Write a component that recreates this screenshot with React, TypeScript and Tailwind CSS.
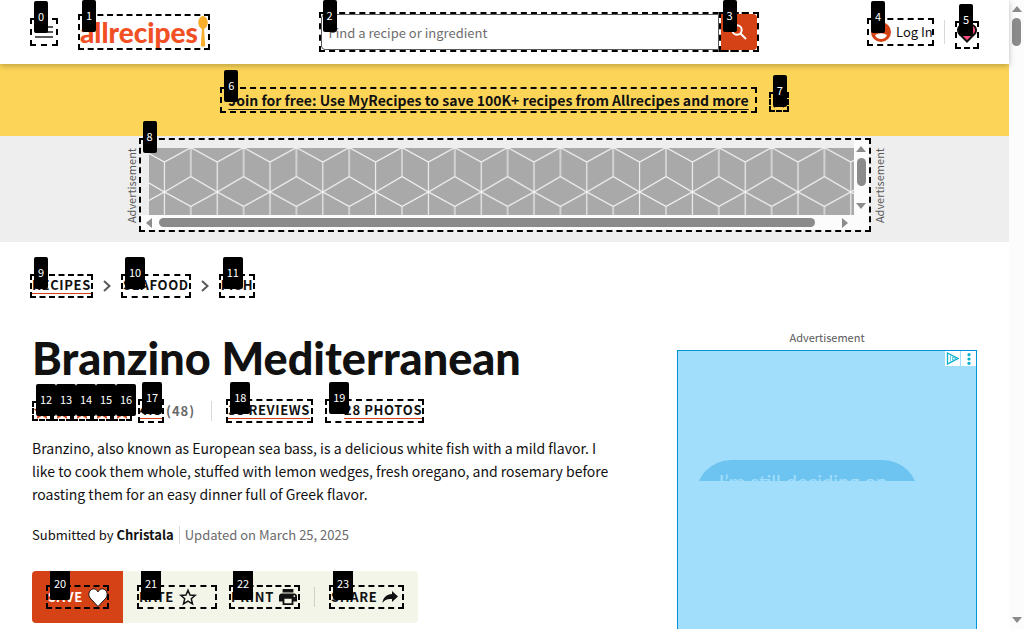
import type { ReactNode } from "react";

const stars = [12, 13, 14, 15, 16];

function Mark({ n, top = "-top-[19px]" }: { n: number; top?: string }) {
  return (
    <span aria-hidden="true" className="pointer-events-none absolute inset-0 border-2 border-dashed border-black">
      <span
        className={`absolute left-[2px] ${top} z-10 flex h-8 items-center rounded-xs bg-black px-1 pb-[2px] text-[11px] leading-4 font-normal tracking-normal text-white`}
      >
        {n}
      </span>
    </span>
  );
}

function Crumb({ n, children, underline = false }: { n: number; children: ReactNode; underline?: boolean }) {
  return (
    <a href="#" className="relative flex h-6 items-start px-[2px] pt-[2px] text-[13px] leading-[18px] font-bold tracking-wider">
      <span className={underline ? "h-[18px] border-b border-[#d54215]" : ""}>{children}</span>
      <Mark n={n} />
    </a>
  );
}

function Chevron() {
  return (
    <svg className="mx-[10px] h-3 w-2" viewBox="0 0 8 12" fill="none" stroke="#595959" strokeWidth="2">
      <path d="M1 1l5.500 5L1 11" />
    </svg>
  );
}

function Triangle({ className }: { className: string }) {
  return (
    <svg className={`h-[6px] w-[10px] shrink-0 ${className}`} viewBox="0 0 10 6" fill="#8b8b8b">
      <path d="M5 0l5 6H0z" />
    </svg>
  );
}

function CubePattern() {
  return (
    <svg className="block h-[67px] w-full bg-[#a9a9a9]" aria-hidden="true">
      <defs>
        <pattern id="cubes" x="-11" y="0" width="52.8" height="67" patternUnits="userSpaceOnUse">
          <path
            d="M0 -.5L26.4 14L52.8 -.5M0 28.5L26.4 44L52.8 28.5M0 58.5L26.4 44L52.8 58.5M26.4 14V67M0 0V28.5M0 58.5V67M52.8 0V28.5M52.8 58.5V67"
            fill="none"
            stroke="#f2f2f2"
            strokeWidth="1.1"
          />
        </pattern>
      </defs>
      <rect width="100%" height="100%" fill="url(#cubes)" />
    </svg>
  );
}

function Header() {
  return (
    <header className="relative z-10 flex h-16 shrink-0 items-center justify-between bg-white px-[30px] shadow-[0_2px_6px_rgba(0,0,0,0.25)]">
      <div className="flex items-center gap-5">
        <button aria-label="Menu" className="relative flex h-7 w-7 items-center justify-center">
          <svg className="h-4 w-[18px]" viewBox="0 0 18 16" stroke="#595959" strokeWidth="2">
            <path d="M0 3h18M0 8h18M0 13h18" />
          </svg>
          <Mark n={0} />
        </button>
        <a href="#" className="relative flex h-9 w-[132px] items-center pl-[2px]">
          <span className="font-[Lato,sans-serif] text-[28px] leading-8 font-black text-[#f15025]">allrecipes</span>
          <svg className="absolute top-[2px] right-[2px] h-8 w-[10px]" viewBox="0 0 10 32" fill="#f9ae2b">
            <ellipse cx="5" cy="6.5" rx="4.8" ry="6.5" />
            <path d="M4 12h2l1.200 18q-2.200 1.500-4.400 0z" />
          </svg>
          <Mark n={1} top="-top-[16px]" />
        </a>
      </div>
      <form className="relative flex h-10 w-[440px] p-[2px]">
        <input
          aria-label="Search"
          placeholder="Find a recipe or ingredient"
          className="min-w-0 flex-1 rounded-l border border-[#595959] px-[7px] pt-[2px] text-[13px] leading-5 placeholder:text-[#6e6e6e]"
        />
        <Mark n={2} top="-top-[14px]" />
        <button type="button" aria-label="Submit search" className="relative -my-[2px] -mr-[2px] flex w-10 p-[2px]">
          <span className="flex flex-1 items-center justify-center rounded-r bg-[#d54215]">
            <svg className="h-4 w-4" viewBox="0 0 16 16" fill="none" stroke="white" strokeWidth="2">
              <circle cx="6" cy="6" r="4.700" />
              <path d="M9.500 9.500L15 15" />
            </svg>
          </span>
          <Mark n={3} top="-top-[14px]" />
        </button>
      </form>
      <div className="flex items-center">
        <a href="#" className="relative flex h-7 w-[67px] items-center pl-1 text-[13px] leading-5">
          <svg className="mr-[5px] h-5 w-5 shrink-0" viewBox="0 0 20 20">
            <circle cx="10" cy="10" r="10" fill="#d54215" />
            <circle cx="10" cy="7" r="3.500" fill="white" />
            <path d="M4 13q6-3.500 12 0q-1.500 4-6 4t-6-4z" fill="white" />
          </svg>
          <span className="whitespace-nowrap">Log In</span>
          <Mark n={4} />
        </a>
        <span className="mx-[10px] h-6 w-px bg-[#d8d8d8]" />
        <a href="#" aria-label="Saved recipes" className="relative mt-[6px] flex h-7 w-6 items-start justify-center pt-[2px]">
          <svg className="h-5 w-5" viewBox="0 0 20 20" fill="#ff4b7d" stroke="#111" strokeWidth="2">
            <path d="M10 18.500L2.500 11C0 8.200.8 4 3.500 2.500S9 2.500 10 5c1-2.500 3.800-4 6.500-2.500S20 8.200 17.500 11z" />
          </svg>
          <Mark n={5} />
        </a>
      </div>
    </header>
  );
}

function SideLabel() {
  return <span className="mt-[10px] rotate-180 text-[11px] leading-4 text-[#595959] [writing-mode:vertical-rl]">Advertisement</span>;
}

function AdStrip() {
  return (
    <section className="flex h-[106px] shrink-0 items-start justify-center bg-[#eee] pt-[2px]">
      <SideLabel />
      <div className="relative h-[94px] w-[732px] p-[2px]">
        <div className="flex h-[75px]">
          <div className="min-w-0 flex-1 pt-2 pl-2">
            <CubePattern />
          </div>
          <div className="flex w-[15px] flex-col items-center bg-[#fcfcfc] pt-[6px] pb-[6px]">
            <Triangle className="" />
            <span className="mt-[6px] mb-auto h-7 w-[9px] rounded-full bg-[#8b8b8b]" />
            <Triangle className="rotate-180" />
          </div>
        </div>
        <div className="flex h-[15px] items-center bg-[#fcfcfc] pr-[19px] pl-[3px]">
          <Triangle className="-rotate-90" />
          <span className="mr-auto ml-[5px] h-[9px] w-[656px] rounded-full bg-[#8b8b8b]" />
          <Triangle className="rotate-90" />
        </div>
        <Mark n={8} />
      </div>
      <SideLabel />
    </section>
  );
}

function Rating() {
  return (
    <div className="mt-[17px] flex h-6 items-center text-[13px] leading-[18px] font-bold tracking-[1px]">
      {stars.map((n) => (
        <button key={n} aria-label={`${n - 11} stars`} className="relative flex h-5 w-5 items-center justify-center">
          <svg className="h-[18px] w-[18px] shrink-0" viewBox="0 0 24 24" fill="#d54215">
            <path d="M12 1l3.200 7.500 8.100.7-6.200 5.300 1.900 8L12 18.200l-7 4.300 1.900-8L.7 9.200l8.100-.7z" />
          </svg>
          <Mark n={n} />
        </button>
      ))}
      <a href="#" className="relative ml-[6px] flex h-6 w-[26px] justify-center pt-[2px]">
        <span className="h-[18px] border-b border-[#d54215]">4.8</span>
        <Mark n={17} />
      </a>
      <span className="ml-[2px] text-[#6a6a6a]">(48)</span>
      <span className="mr-[14px] ml-4 h-5 w-px bg-[#d8d8d8]" />
      <a href="#" className="relative flex h-6 w-[87px] px-[2px] pt-[2px] tracking-wider whitespace-nowrap">
        <span className="h-[18px] border-b border-[#d54215]">38 REVIEWS</span>
        <Mark n={18} />
      </a>
      <a href="#" className="relative ml-3 flex h-6 w-[99px] justify-end px-[2px] pt-[2px] tracking-wider whitespace-nowrap">
        <span className="h-[18px] border-b border-[#d54215]">28 PHOTOS</span>
        <Mark n={19} />
      </a>
    </div>
  );
}

function Action({ n, label, width, children }: { n: number; label: string; width: string; children: ReactNode }) {
  return (
    <button className={`relative flex h-6 items-center gap-[5px] pl-[2px] text-[13px] leading-5 font-bold tracking-wider ${width}`}>
      {label}
      {children}
      <Mark n={n} />
    </button>
  );
}

function Actions() {
  return (
    <div className="mt-[26px] flex h-[52px] w-[386px] items-center overflow-hidden rounded bg-[#f3f5e8]">
      <div className="flex h-full w-[91px] items-center bg-[#d54215] pl-[14px] text-white">
        <Action n={20} label="SAVE" width="w-[63px]">
          <svg className="h-5 w-5 shrink-0" viewBox="0 0 20 20" fill="white" stroke="#111" strokeWidth="1">
            <path d="M10 19.500L2 11C0 8.200.8 4 3.500 2.500S9 2.500 10 5c1-2.500 3.800-4 6.500-2.500S20 8.200 18 11z" />
          </svg>
        </Action>
      </div>
      <div className="flex items-center pl-[14px]">
        <Action n={21} label="RATE" width="w-20">
          <svg className="h-[18px] w-[18px]" viewBox="0 0 24 24" fill="none" stroke="#111" strokeWidth="2">
            <path d="M12 3l2.700 6.300 6.900.6-5.200 4.500 1.600 6.800L12 17.600l-6 3.600 1.600-6.800L2.400 9.900l6.900-.6z" />
          </svg>
        </Action>
        <span className="w-3" />
        <Action n={22} label="PRINT" width="w-[71px]">
          <svg className="h-[18px] w-[18px] shrink-0" viewBox="2 2 20 20" fill="#111">
            <path d="M19 8H5c-1.700 0-3 1.300-3 3v6h4v4h12v-4h4v-6c0-1.700-1.300-3-3-3zm-3 11H8v-5h8v5zm3-7c-.6 0-1-.4-1-1s.4-1 1-1 1 .4 1 1-.4 1-1 1zm-1-9H6v4h12V3z" />
          </svg>
        </Action>
        <span className="mx-[14px] h-5 w-px bg-[#cfd1c6]" />
        <Action n={23} label="SHARE" width="w-[75px]">
          <svg className="h-4 w-4 shrink-0" viewBox="0 0 16 16" fill="#111">
            <path d="M10 2l6 5.500-6 5.500V10C6 9.500 2.500 10.500.5 14 1 8.500 4.500 5.500 10 5z" />
          </svg>
        </Action>
      </div>
    </div>
  );
}

function SideAd() {
  return (
    <aside className="flex w-[300px] shrink-0 flex-col">
      <p className="h-4 text-center text-[11px] leading-[14px] text-[#595959]">Advertisement</p>
      <div className="mt-1 -mb-1 flex flex-1 flex-col border border-[#0093d6] bg-[#a1defc]">
        <div className="flex justify-end gap-px">
          <span className="flex h-[15px] w-[15px] items-center justify-center bg-white">
            <svg className="h-[13px] w-[13px]" viewBox="0 0 13 13" fill="none" stroke="#00aecd">
              <path d="M1.500 1l10.500 5.500-10.500 5.500z" strokeWidth="1.300" />
              <path d="M4.500 3.500v6M6.500 5v3.200l3-1.700z" strokeWidth=".6" />
            </svg>
          </span>
          <span className="flex h-[15px] w-[15px] items-center justify-center bg-white">
            <svg className="h-3 w-1" viewBox="0 0 4 12" fill="#00aecd">
              <circle cx="2" cy="1.700" r="1.600" />
              <circle cx="2" cy="6" r="1.600" />
              <circle cx="2" cy="10.300" r="1.600" />
            </svg>
          </span>
        </div>
        <div className="mt-[94px] ml-[18px] h-[21px] w-[222px] overflow-hidden">
          <div className="h-[70px] rounded-[36px] bg-[#6ec4f0] pt-[9px] pr-2 text-center font-[Lato,sans-serif] text-[20px] leading-6 text-[#a1defc]">
            I’m still deciding on
          </div>
        </div>
      </div>
    </aside>
  );
}

export default function App() {
  return (
    <div className="flex h-screen overflow-hidden bg-white font-['Noto_Sans_CJK_SC',sans-serif] text-[#111]">
      <div className="flex min-w-0 flex-1 flex-col">
        <Header />
        <section className="flex h-[72px] shrink-0 items-center justify-center gap-3 bg-[#fcd558]">
          <a
            href="#"
            className="relative flex h-[26px] items-center px-2 text-[14px] leading-[22px] font-bold whitespace-nowrap underline underline-offset-3"
          >
            Join for free: Use MyRecipes to save 100K+ recipes from Allrecipes and more
            <Mark n={6} />
          </a>
          <button aria-label="Close" className="relative mt-1 flex h-5 w-5 items-center justify-center">
            <svg className="h-4 w-4" viewBox="0 0 16 16" stroke="#111" strokeWidth="2">
              <path d="M3 3l10 10M13 3L3 13" />
            </svg>
            <Mark n={7} />
          </button>
        </section>
        <AdStrip />
        <nav aria-label="Breadcrumb" className="flex shrink-0 items-center px-[30px] pt-8">
          <Crumb n={9} underline>RECIPES</Crumb>
          <Chevron />
          <Crumb n={10}>SEAFOOD</Crumb>
          <Chevron />
          <Crumb n={11}>FISH</Crumb>
        </nav>
        <div className="flex flex-1 justify-between px-8 pt-8">
          <main className="w-[600px]">
            <h1 className="mt-1 font-[Lato,sans-serif] text-[45px] leading-[48px] font-black whitespace-nowrap">Branzino Mediterranean</h1>
            <Rating />
            <p className="mt-[14px] max-w-[584px] text-[14px] leading-[23px]">
              Branzino, also known as European sea bass, is a delicious white fish with a mild flavor. I like to cook them whole, stuffed with lemon
              wedges, fresh oregano, and rosemary before roasting them for an easy dinner full of Greek flavor.
            </p>
            <div className="mt-[19px] flex items-center text-[13px] leading-5">
              <span>
                Submitted by <b>Christala</b>
              </span>
              <span className="mx-[5px] h-[18px] w-px bg-[#d8d8d8]" />
              <span className="text-[#6a6a6a]">Updated on March 25, 2025</span>
            </div>
            <Actions />
          </main>
          <SideAd />
        </div>
      </div>
      <div className="flex w-[15px] shrink-0 flex-col items-center bg-[#fcfcfc] py-[6px]">
        <Triangle className="" />
        <span className="mt-[6px] mb-auto h-7 w-[9px] rounded-full bg-[#8b8b8b]" />
        <Triangle className="rotate-180" />
      </div>
    </div>
  );
}
